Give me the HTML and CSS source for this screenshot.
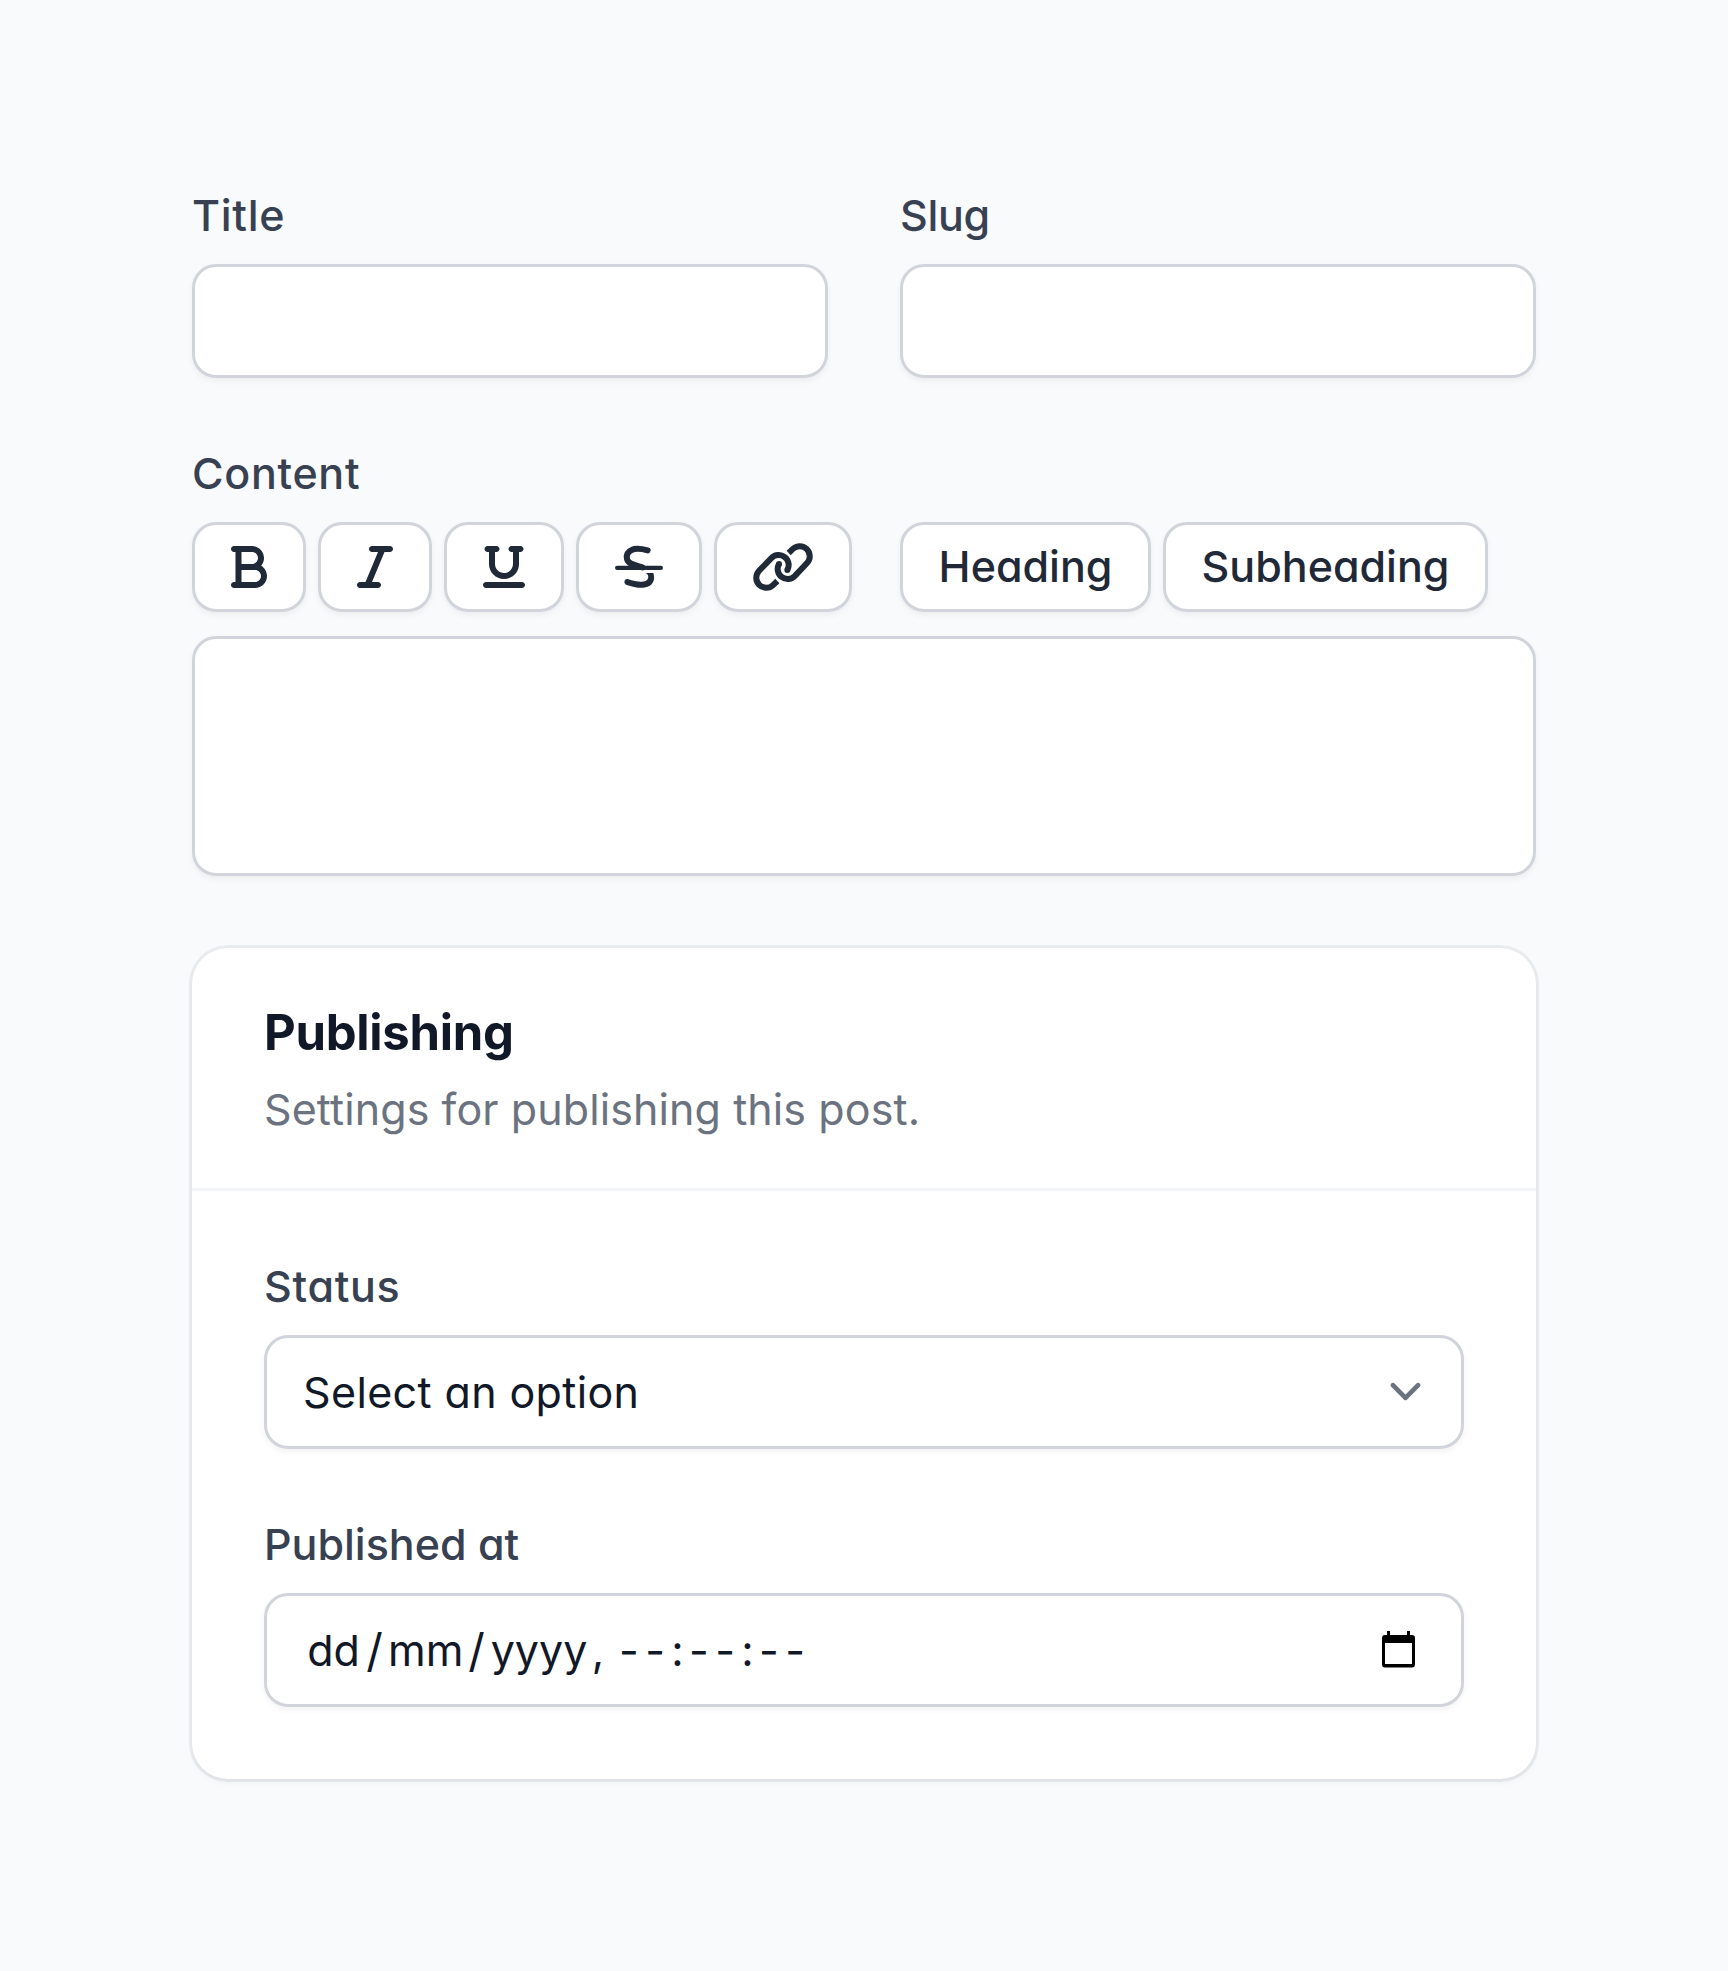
FILE: index.html
```html
<!DOCTYPE html>
<html lang="en">
<head>
<meta charset="utf-8">
<title>Edit post</title>
<link rel="stylesheet" href="styles.css">
</head>
<body>
<form class="form">
  <div class="row">
    <div class="field"><div class="label wide">Title</div><div class="control"></div></div>
    <div class="field"><div class="label tight">Slug</div><div class="control"></div></div>
  </div>
  <div class="field content">
    <div class="label wide">Content</div>
    <div class="toolbar">
      <div class="group">
        <button type="button" class="btn" aria-label="Bold"><svg width="36" height="48" viewBox="0 0 384 512"><path d="M0 64C0 46.3 14.3 32 32 32H80 96 224c70.7 0 128 57.3 128 128c0 31.3-11.3 60.1-30 82.3c37.1 22.4 62 63.1 62 109.7c0 70.7-57.3 128-128 128H96 80 32c-17.7 0-32-14.3-32-32s14.3-32 32-32H48V256 96H32C14.3 96 0 81.7 0 64zM224 224c35.3 0 64-28.7 64-64s-28.7-64-64-64H112V224H224zM112 288V416H256c35.3 0 64-28.7 64-64s-28.7-64-64-64H224 112z"/></svg></button>
        <button type="button" class="btn" aria-label="Italic"><svg width="36" height="48" viewBox="0 0 384 512"><path d="M128 64c0-17.7 14.3-32 32-32H352c17.7 0 32 14.3 32 32s-14.3 32-32 32H293.3L160 416h64c17.7 0 32 14.3 32 32s-14.3 32-32 32H32c-17.7 0-32-14.3-32-32s14.3-32 32-32H90.7L224 96H160c-17.7 0-32-14.3-32-32z"/></svg></button>
        <button type="button" class="btn" aria-label="Underline"><svg width="42" height="48" viewBox="0 0 448 512"><path d="M16 64c0-17.7 14.3-32 32-32h96c17.7 0 32 14.3 32 32s-14.3 32-32 32H128V224c0 53 43 96 96 96s96-43 96-96V96H304c-17.7 0-32-14.3-32-32s14.3-32 32-32h96c17.7 0 32 14.3 32 32s-14.3 32-32 32H384V224c0 88.4-71.6 160-160 160s-160-71.6-160-160V96H48C30.3 96 16 81.7 16 64zM0 448c0-17.7 14.3-32 32-32H416c17.7 0 32 14.3 32 32s-14.3 32-32 32H32c-17.7 0-32-14.3-32-32z"/></svg></button>
        <button type="button" class="btn" aria-label="Strikethrough"><svg width="48" height="48" viewBox="0 0 144 144"><path class="stroke" stroke-width="13" d="M6.500 74.500H137.500"/><path class="stroke" stroke-width="18" d="M98 22C78 17 60 16 50 21C36 27 34 38 36 48C39 61 54 65 82 73"/><path d="M93 90H115C120 106 117 121 103 129C86 138 62 135 33 125A9 9 0 0 1 38 108C62 116 80 119 92 114C100 110 101 102 99 97C97 93 95 92 93 90Z"/></svg></button>
        <button type="button" class="btn" aria-label="Link"><svg width="60" height="48" viewBox="0 0 180 144"><path class="line" d="M73 114L60.200 126.200A30 30 0 0 1 17.800 83.800L55.800 44.800A30 30 0 0 1 103 81M107 30L119.800 17.800A30 30 0 0 1 162.200 60.200L125.200 99.200A30 30 0 0 1 78 63"/><circle cx="103" cy="81" r="9"/><circle cx="78" cy="63" r="9"/></svg></button>
      </div>
      <div class="group">
        <button type="button" class="btn heading">Heading</button>
        <button type="button" class="btn subheading">Subheading</button>
      </div>
      <div class="edge"></div>
    </div>
    <div class="control editor"></div>
  </div>
  <section class="card">
    <header class="card-head">
      <h2 class="card-title">Publishing</h2>
      <p class="card-note">Settings for publishing this post.</p>
    </header>
    <div class="card-body">
      <div class="field">
        <div class="label wide">Status</div>
        <div class="control select">Select an option<svg class="chevron" width="63" height="63" viewBox="0 0 20 20"><path d="m6 8 4 4 4-4"/></svg></div>
      </div>
      <div class="field">
        <div class="label">Published at</div>
        <div class="control date">
          <div class="parts"><span class="day">dd</span><span class="slash">/</span><span class="month">mm</span><span class="slash">/</span><span class="year">yyyy</span><span class="comma">,</span><span class="time">--</span><span class="colon">:</span><span class="time">--</span><span class="colon">:</span><span class="time">--</span></div>
          <svg class="calendar" width="33" height="37" viewBox="0 0 33 37"><path fill="#000" fill-rule="evenodd" d="M5 0H8V4H25V0H28V4H30Q33 4 33 7V33Q33 36.500 30 36.500H3Q0 36.500 0 33V7Q0 4 3 4H5ZM3 12V33H30V12Z"/></svg>
        </div>
      </div>
    </div>
  </section>
</form>
</body>
</html>
```

FILE: styles.css
```css
* { box-sizing: border-box; }
body { margin: 0; background: #f9fafc; color: #111827; font-family: Inter, "Liberation Sans", sans-serif; font-feature-settings: "cv11"; font-size: 43px; line-height: 60px; }
.form { display: flex; flex-direction: column; padding: 185px 192px; }
.row { display: grid; grid-template-columns: 1fr 1fr; gap: 72px; }
.content { margin: 65px 0 72px; }
.label { height: 60px; margin-bottom: 19px; color: #374151; font-weight: 500; white-space: nowrap; }
.wide { letter-spacing: .7px; }
.tight { letter-spacing: -.3px; }
.control { height: 114px; background: #fff; border: 3px solid #d2d4db; border-radius: 24px; box-shadow: 0 3px 6px rgba(0, 0, 0, .05); }
.toolbar { display: flex; gap: 48px; height: 90px; margin-bottom: 24px; }
.group { display: flex; gap: 12px; }
.btn { display: flex; align-items: center; justify-content: center; height: 90px; padding: 0 36px; background: #fff; border: 3px solid #d2d4db; border-radius: 24px; box-shadow: 0 3px 6px rgba(0, 0, 0, .05); color: #1f2937; font: inherit; font-weight: 500; font-feature-settings: inherit; }
.btn svg { display: block; fill: currentColor; }
.btn .stroke { fill: none; stroke: currentColor; stroke-linecap: round; }
.btn .line { fill: none; stroke: currentColor; stroke-width: 18; }
.heading { width: 251px; padding-bottom: 2px; }
.subheading { width: 325px; padding-bottom: 2px; }
.edge { width: 2px; height: 66px; margin: 18px 0 0 auto; background: #f4f5f7; }
.editor { height: 240px; }
.card { background: #fff; border-radius: 36px; box-shadow: 0 0 0 3px rgba(17, 24, 39, .06), 0 3px 6px rgba(0, 0, 0, .05); }
.card-head { height: 243px; padding: 49px 72px 0; border-bottom: 3px solid #f3f4f6; }
.card-title { margin: 0; font-size: 49px; line-height: 72px; font-weight: 700; letter-spacing: -.28px; }
.card-note { margin: 10px 0 0; color: #6b7280; font-weight: 400; letter-spacing: .1px; }
.card-body { display: flex; flex-direction: column; gap: 65px; padding: 65px 72px 72px; }
.select, .date { display: flex; align-items: center; justify-content: space-between; padding: 0 24px 1px 36px; letter-spacing: .37px; }
.chevron path { fill: none; stroke: #6b7280; stroke-width: 1.5; stroke-linecap: round; stroke-linejoin: round; }
.date { padding: 0 46px 1px 39px; letter-spacing: 0; }
.parts { display: flex; white-space: nowrap; }
.parts span { text-align: center; }
.day { width: 55px; }
.slash { width: 27px; font-size: 46px; }
.month { width: 75px; }
.year { width: 98px; }
.comma { width: 20px; }
.parts .time { width: 53px; text-align: left; text-indent: 3px; letter-spacing: 6.5px; }
.comma + .time { margin-left: 8px; }
.colon { width: 17px; }
```
